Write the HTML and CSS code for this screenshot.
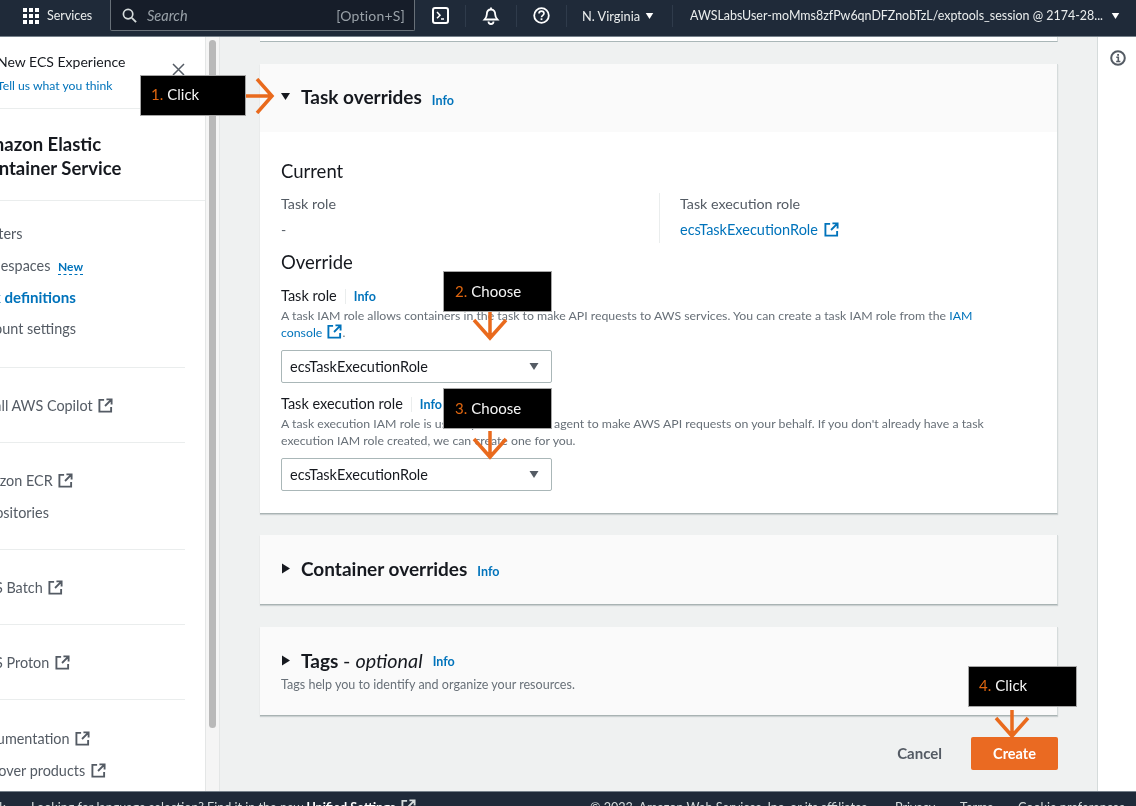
FILE: index.html
```html
<!DOCTYPE html>
<html lang="en">
<head>
<meta charset="utf-8">
<title>Task overrides</title>
<link rel="stylesheet" href="styles.css">
</head>
<body>
<svg class="defs" width="0" height="0" aria-hidden="true">
  <symbol id="ext" viewBox="0 0 16 16"><path d="M6.5 2H1.500v12.500H14V9.500M9 1.500h5.500V7M14.200 1.800 7.500 8.500" fill="none" stroke="currentColor" stroke-width="2"/></symbol>
  <symbol id="caret" viewBox="0 0 12 10"><path d="M1 1h10L6 9z" fill="currentColor"/></symbol>
  <symbol id="tri-r" viewBox="0 0 10 12"><path d="M1 1l8 5-8 5z" fill="currentColor"/></symbol>
</svg>

<header class="topbar">
  <svg class="grid-icon" width="16" height="16" viewBox="0 0 16 16"><g fill="#fff"><rect width="4" height="4"/><rect x="6" width="4" height="4"/><rect x="12" width="4" height="4"/><rect y="6" width="4" height="4"/><rect x="6" y="6" width="4" height="4"/><rect x="12" y="6" width="4" height="4"/><rect y="12" width="4" height="4"/><rect x="6" y="12" width="4" height="4"/><rect x="12" y="12" width="4" height="4"/></g></svg>
  <span class="services">Services</span>
  <div class="search">
    <svg width="15" height="15" viewBox="0 0 16 16"><circle cx="6.5" cy="6.5" r="5" fill="none" stroke="#d5dbdb" stroke-width="1.8"/><path d="M10.5 10.5 15 15" stroke="#d5dbdb" stroke-width="2"/></svg>
    <span class="search-text">Search</span>
    <span class="search-key">[Option+S]</span>
  </div>
  <svg class="tool shell" width="17" height="17" viewBox="0 0 17 17"><rect x="1" y="1" width="15" height="15" rx="2" fill="none" stroke="#fff" stroke-width="2"/><path d="M5 5l3 3.2-3 3M9 12h3" fill="none" stroke="#fff" stroke-width="1.5"/></svg>
  <span class="sep"></span>
  <svg class="tool" width="18" height="18" viewBox="0 0 18 18"><path d="M9 2.500c-3 0-4.200 2.200-4.200 5 0 2.500-1.200 3.800-2.300 5h13c-1.100-1.200-2.300-2.500-2.300-5 0-2.800-1.200-5-4.200-5z" fill="none" stroke="#fff" stroke-width="1.800"/><path d="M9 .5v2M6.500 14.500a2.500 2.500 0 0 0 5 0" fill="none" stroke="#fff" stroke-width="1.800"/></svg>
  <span class="sep"></span>
  <svg class="tool" width="17" height="17" viewBox="0 0 17 17"><circle cx="8.500" cy="8.500" r="7.300" fill="none" stroke="#fff" stroke-width="1.800"/><path d="M6 6.500c0-3.200 5-3.200 5 0 0 2-2.500 1.800-2.500 3.800" fill="none" stroke="#fff" stroke-width="1.600"/><rect x="7.600" y="11.300" width="1.800" height="1.800" fill="#fff"/></svg>
  <span class="sep"></span>
  <span class="region">N. Virginia</span>
  <svg class="hcaret" width="9" height="8"><use href="#caret"/></svg>
  <span class="sep sep-account"></span>
  <span class="account">AWSLabsUser-moMms8zfPw6qnDFZnobTzL/exptools_session @ 2174-28...</span>
  <svg class="hcaret" width="9" height="8"><use href="#caret"/></svg>
</header>

<div class="layout">
  <aside class="sidebar">
    <div class="sidebar-inner">
      <div class="banner">
        <div>
          <div class="banner-title">New ECS Experience</div>
          <a class="banner-link">Tell us what you think</a>
        </div>
        <svg class="close" width="13" height="13" viewBox="0 0 13 13"><path d="M1 1l11 11M12 1 1 12" stroke="#545b64" stroke-width="1.500"/></svg>
      </div>
      <h2 class="service">Amazon Elastic<br>Container Service</h2>
      <ul class="nav nav-first">
        <li>Clusters</li>
        <li>Namespaces <span class="new">New</span></li>
        <li class="active">Task definitions</li>
        <li>Account settings</li>
      </ul>
      <ul class="nav"><li>Install AWS Copilot <svg class="ext" width="15" height="15"><use href="#ext"/></svg></li></ul>
      <ul class="nav"><li>Amazon ECR <svg class="ext" width="15" height="15"><use href="#ext"/></svg></li><li>Repositories</li></ul>
      <ul class="nav"><li>AWS Batch <svg class="ext" width="15" height="15"><use href="#ext"/></svg></li></ul>
      <ul class="nav"><li>AWS Proton <svg class="ext" width="15" height="15"><use href="#ext"/></svg></li></ul>
      <ul class="nav nav-last"><li>Documentation <svg class="ext" width="15" height="15"><use href="#ext"/></svg></li><li>Discover products <svg class="ext" width="15" height="15"><use href="#ext"/></svg></li></ul>
    </div>
  </aside>
  <div class="scrolltrack"><div class="thumb"></div></div>

  <main class="content">
    <div class="card-stub"></div>

    <section class="card card-task">
      <div class="card-head">
        <svg class="tri" width="11" height="9"><use href="#caret"/></svg>
        <h3>Task overrides</h3><a class="info">Info</a>
      </div>
      <div class="card-body">
        <h4>Current</h4>
        <div class="current">
          <div class="cell">
            <div class="key">Task role</div>
            <div class="val">-</div>
          </div>
          <div class="cell cell-right">
            <div class="key">Task execution role</div>
            <a class="link-lg">ecsTaskExecutionRole <svg class="ext" width="15" height="15"><use href="#ext"/></svg></a>
          </div>
        </div>
        <h4 class="override">Override</h4>
        <div class="field">
          <div class="label">Task role<a class="info info-label">Info</a></div>
          <p class="desc">A task IAM role allows containers in the task to make API requests to AWS services. You can create a task IAM role from the <a>IAM console <svg class="ext" width="15" height="15"><use href="#ext"/></svg></a>.</p>
          <div class="select">ecsTaskExecutionRole<svg width="12" height="9"><use href="#caret"/></svg></div>
        </div>
        <div class="field field-2">
          <div class="label">Task execution role<a class="info info-label">Info</a></div>
          <p class="desc">A task execution IAM role is used by the container agent to make AWS API requests on your behalf. If you don't already have a task execution IAM role created, we can create one for you.</p>
          <div class="select">ecsTaskExecutionRole<svg width="12" height="9"><use href="#caret"/></svg></div>
        </div>
      </div>
    </section>

    <section class="card card-container">
      <div class="card-line">
        <svg class="tri" width="10" height="13"><use href="#tri-r"/></svg>
        <h3>Container overrides</h3><a class="info">Info</a>
      </div>
    </section>

    <section class="card card-tags">
      <div class="card-line">
        <svg class="tri" width="10" height="13"><use href="#tri-r"/></svg>
        <h3>Tags <span class="opt">- <i>optional</i></span></h3><a class="info">Info</a>
      </div>
      <p class="tags-desc">Tags help you to identify and organize your resources.</p>
    </section>

    <div class="actions">
      <span class="cancel">Cancel</span>
      <span class="create">Create</span>
    </div>
  </main>

  <aside class="tools">
    <svg width="16" height="16" viewBox="0 0 16 16"><circle cx="8" cy="8" r="6.800" fill="none" stroke="#545b64" stroke-width="2"/><path d="M6.300 7.300H8.300V11.500M6.200 11.500h4.200" fill="none" stroke="#545b64" stroke-width="1.600"/><rect x="7.200" y="4" width="1.800" height="1.800" fill="#545b64"/></svg>
  </aside>
</div>

<footer class="footer">
  <span class="fb">Feedback</span>
  <span class="lang">Looking for language selection? Find it in the new <b>Unified Settings</b> <svg class="ext" width="15" height="15"><use href="#ext"/></svg></span>
  <span class="copy">© 2023, Amazon Web Services, Inc. or its affiliates.</span>
  <span class="f-privacy">Privacy</span>
  <span class="f-terms">Terms</span>
  <span class="f-cookie">Cookie preferences</span>
</footer>

<div class="callout c1"><b>1.</b> Click</div>
<svg class="arrow a1" width="30" height="36" viewBox="0 0 30 36"><path d="M0 18h26M11 1l15 17-15 17" fill="none" stroke="#e96a1d" stroke-width="3.500"/></svg>
<div class="callout c2"><b>2.</b> Choose</div>
<svg class="arrow a2" width="36" height="30" viewBox="0 0 36 30"><path d="M18 0v26M2 8l16 18L34 8" fill="none" stroke="#e96a1d" stroke-width="3.500"/></svg>
<div class="callout c3"><b>3.</b> Choose</div>
<svg class="arrow a3" width="36" height="30" viewBox="0 0 36 30"><path d="M18 0v26M2 8l16 18L34 8" fill="none" stroke="#e96a1d" stroke-width="3.500"/></svg>
<div class="callout c4"><b>4.</b> Click</div>
<svg class="arrow a4" width="36" height="30" viewBox="0 0 36 30"><path d="M18 0v26M2 8l16 18L34 8" fill="none" stroke="#e96a1d" stroke-width="3.500"/></svg>
</body>
</html>
```
FILE: styles.css
```css
* { box-sizing: border-box; }
html, body { margin: 0; height: 100%; }
body {
  width: 1136px; height: 806px; overflow: hidden; position: relative;
  display: flex; flex-direction: column;
  font-family: "Lato", "Liberation Sans", sans-serif;
  font-size: 14px; color: #16191f; background: #fff;
  filter: blur(.35px);
}
.defs { position: absolute; }
ul, p, h2, h3, h4 { margin: 0; padding: 0; }
li { list-style: none; }
.ext { vertical-align: -2px; margin-left: 2px; }

/* top bar */
.topbar {
  flex: none; height: 37px; padding: 0 0 5px 23px;
  display: flex; align-items: center;
  background: #1f2a39; border-bottom: 1px solid #75808a; color: #eaeded;
  font-size: 12.500px;
}
.services { margin-left: 8px; width: 63px; }
.search {
  width: 305px; height: 31px; margin-top: 0; padding: 0 9px 0 11px;
  display: flex; align-items: center;
  background: #161d29; border: 1px solid #687078; border-top: 0; border-radius: 0 0 2px 2px;
  color: #99a1a8;
}
.search-text { margin-left: 10px; font-style: italic; font-size: 14.500px; }
.search-key { margin-left: auto; font-size: 14px; letter-spacing: .2px; }
.tool { flex: none; }
.shell { margin-left: 17px; }
.sep { width: 1px; height: 22px; background: #2f3b4b; margin: 0 16px; }
.region { margin-left: -1px; font-size: 12.800px; width: 62px; }
.hcaret { flex: none; color: #fff; margin-left: 1px; }
.sep-account { margin: 0 17px 0 18px; }
.account { width: 420px; white-space: nowrap; font-size: 12.450px; }

/* layout */
.layout { flex: 1; min-height: 0; display: flex; }
.sidebar { width: 205px; flex: none; overflow: hidden; background: #fff; color: #545b64; }
.sidebar-inner { width: 234px; margin-left: -29px; }
.banner {
  height: 72px; padding: 15px 0 0 26px; border-bottom: 1px solid #eaeded;
  display: flex; align-items: flex-start; gap: 47px;
}
.banner-title { line-height: 20px; font-size: 14px; color: #16191f; }
.banner-link { display: block; line-height: 20px; margin-top: 4px; font-size: 12.200px; color: #0073bb; }
.close { margin-top: 11px; }
.service {
  height: 92px; padding: 23px 0 0 5px; border-bottom: 1px solid #eaeded;
  font-size: 18.500px; line-height: 24px; font-weight: 700; color: #16191f;
}
.nav {
  margin-right: 20px; padding: 28px 0 26px 0; border-bottom: 1px solid #eaeded;
  display: flex; flex-direction: column; gap: 12px;
  font-size: 14.400px; white-space: nowrap;
}
.nav li { height: 20px; line-height: 20px; }
.nav-first { padding-top: 23px; padding-bottom: 28px; gap: 11.700px; }
.nav-last { padding-top: 29px; border-bottom: 0; }
.nav .active { color: #0073bb; font-weight: 700; font-size: 15.100px; }
.new { margin-left: 4px; color: #0073bb; font-size: 12px; font-weight: 700; border-bottom: 1px dashed #0073bb; }

.scrolltrack { width: 15px; flex: none; background: #f5f5f5; border-left: 1px solid #e4e6e6; border-right: 1px solid #e4e6e6; padding: 3px 3px 0; }
.thumb { height: 688px; border-radius: 4px; background: #b9b9b9; }

/* content */
.content { flex: 1; min-width: 0; padding: 0 39px 0 40px; background: #eff1f1; display: flex; flex-direction: column; }
.card-stub { height: 5px; background: #fff; border-bottom: 1px solid #aab7b8; border-right: 1px solid #d5dbdb; }
.card { background: #fafafa; border-bottom: 1px solid #a9b3b3; box-shadow: 0 1px 1px rgba(0,28,36,.15); border-right: 1px solid #d5dbdb; }
.card-task { margin-top: 22px; height: 450px; background: #fff; }
.card-head { height: 68px; padding: 0 0 4px 20px; background: #fafafa; display: flex; align-items: center; }
.card-line { display: flex; align-items: center; padding-left: 21px; }
.card-line .info { top: 3px; }
.card-tags .card-line .info { top: 1px; }
h3 { margin-left: 10px; font-size: 19px; font-weight: 700; color: #16191f; white-space: nowrap; }
.opt { font-weight: 400; font-size: 19.800px; }
.tri { flex: none; color: #16191f; }
.info { color: #0073bb; font-size: 12.500px; font-weight: 700; margin-left: 10px; position: relative; top: 4px; }
.card-body { padding: 28px 21px 0; }
h4 { font-size: 18.500px; font-weight: 400; line-height: 22px; color: #16191f; }
.current { display: flex; margin-top: 11px; height: 50px; }
.cell { flex: none; width: 378px; padding-top: 1px; color: #545b64; }
.cell-right { border-left: 1px solid #eaeded; padding-left: 20px; width: 370px; }
.key { line-height: 20px; font-size: 14.300px; }
.val { margin-top: 6px; line-height: 20px; }
.link-lg { display: block; margin-top: 6px; line-height: 20px; color: #0073bb; font-size: 14.500px; }
.override { margin-top: 8px; }
.field { margin-top: 13px; }
.field-2 { margin-top: 11px; }
.label { line-height: 20px; font-size: 14.500px; color: #16191f; }
.info-label { margin-left: 8px; padding-left: 8px; top: 0; border-left: 1px solid #eaeded; }
.desc { width: 720px; margin-top: 0; line-height: 17px; font-size: 12.300px; color: #687078; }
.desc a { color: #0073bb; }
.select {
  height: 33px; width: 271px; margin-top: 9px; padding: 0 11px 0 8px;
  display: flex; align-items: center; justify-content: space-between;
  background: #fff; border: 1px solid #aab7b8; border-radius: 2px;
  font-size: 14.500px; color: #16191f;
}
.select svg { color: #545b64; }
.card-container { margin-top: 21px; height: 70px; padding-top: 22px; }
.card-tags { margin-top: 22px; height: 89px; padding-top: 21px; }
.tags-desc { margin: 4px 0 0 21px; font-size: 12.550px; line-height: 17px; color: #687078; }
.actions { margin-top: 21px; display: flex; align-items: center; justify-content: flex-end; gap: 29px; }
.cancel { font-weight: 700; color: #545b64; font-size: 15px; padding-bottom: 2px; }
.create { width: 87px; height: 33px; display: flex; align-items: center; justify-content: center; background: #ea6a22; color: #fff; font-weight: 700; font-size: 14.500px; border-radius: 2px; }

.tools { width: 39px; flex: none; background: #fff; border-left: 1px solid #d5dbdb; padding: 13px 0 0 12px; }

/* footer */
.footer {
  flex: none; height: 15px; position: relative; overflow: hidden;
  background: #1f2a39; border-top: 1px solid #75808a; color: #d5dbdb;
  display: flex; padding-top: 7px; font-size: 12.600px; line-height: 18px; white-space: nowrap;
}
.fb { margin-left: -47px; width: 78px; }
.lang { width: 559px; }
.lang b { color: #fff; }
.copy { width: 305px; }
.f-privacy { width: 65px; }
.f-terms { width: 58px; }

/* callouts */
.callout {
  position: absolute; width: 109px; height: 41px; padding: 0 10px 2px;
  display: flex; align-items: center; gap: 4px;
  background: #000; border: 1px solid #a6a6a6; color: #f5f5f5; font-size: 15px; line-height: 1;
}
.callout b { color: #e0660f; font-weight: 400; }
.c1 { left: 140px; top: 75px; width: 106px; }
.c2 { left: 443px; top: 271px; padding: 0 11px; }
.c3 { left: 443px; top: 388px; padding: 0 11px; }
.c4 { left: 968px; top: 666px; }
.arrow { position: absolute; }
.a1 { left: 246px; top: 78px; }
.a2 { left: 472px; top: 312px; }
.a3 { left: 472px; top: 431px; }
.a4 { left: 994px; top: 710px; }
```
